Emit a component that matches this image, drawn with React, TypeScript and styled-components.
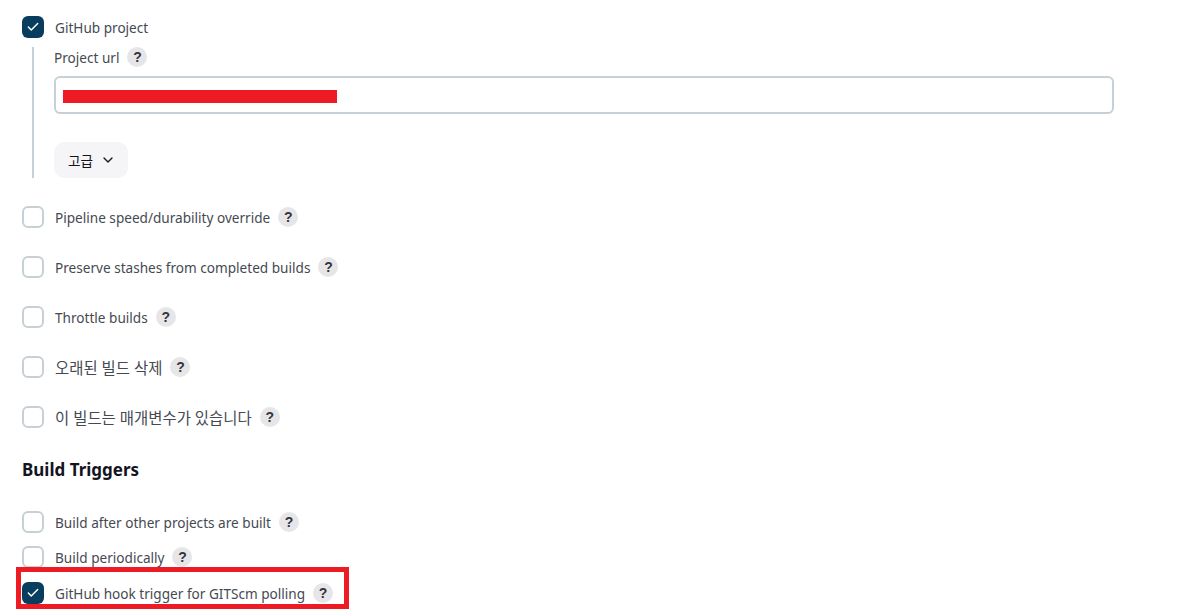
import styled, { createGlobalStyle } from 'styled-components'
import { Check, ChevronDown } from 'lucide-react'

const GlobalStyle = createGlobalStyle`
  html, body {
    margin: 0;
    background: #fff;
    overflow: hidden;
  }
  body {
    font-family: 'Noto Sans', 'Noto Sans CJK KR', sans-serif;
    font-size: 13.6px;
    color: #14141f;
  }
`

const Page = styled.main`
  width: 1203px;
  height: 609px;
  padding: 16px 0 0 22px;
  box-sizing: border-box;
  overflow: hidden;
`

const Row = styled.div<{ $top?: number }>`
  display: flex;
  align-items: center;
  height: 22px;
  margin-top: ${(props) => props.$top ?? 0}px;
`

const Box = styled.span<{ $checked?: boolean }>`
  width: 22px;
  height: 22px;
  box-sizing: border-box;
  flex-shrink: 0;
  display: flex;
  align-items: center;
  justify-content: center;
  border-radius: 6px;
  border: ${(props) => (props.$checked ? 'none' : '2px solid #c6d0d5')};
  background: ${(props) => (props.$checked ? '#083d5e' : '#fff')};
  color: #fff;
`

const RowLabel = styled.span<{ $korean?: boolean }>`
  margin: 2px 0 0 11px;
  line-height: 22px;
  color: #454a52;
  white-space: nowrap;
  font-size: ${(props) => (props.$korean ? '15.45px' : 'inherit')};
`

const Help = styled.span`
  width: 20px;
  height: 20px;
  margin-left: 8px;
  flex-shrink: 0;
  display: flex;
  align-items: center;
  justify-content: center;
  border-radius: 50%;
  background: #e6e6e8;
  color: #33333d;
  font-family: 'Liberation Sans', sans-serif;
  font-size: 14px;
  font-weight: 700;
`

const Nested = styled.div`
  margin: 9px 0 0 10px;
  width: 1082px;
  height: 131px;
  padding-left: 20px;
  border-left: 2px solid #c6d0d5;
  box-sizing: border-box;
`

const FieldLabel = styled.div`
  display: flex;
  align-items: center;
  height: 20px;
  margin-top: 1px;
  color: #454a52;
`

const UrlInput = styled.div`
  position: relative;
  height: 38px;
  margin-top: 9px;
  box-sizing: border-box;
  border: 2px solid #c6d0d5;
  border-radius: 6px;
  background: #fff;
`

const Redaction = styled.span`
  position: absolute;
  left: 7px;
  top: 12px;
  width: 274px;
  height: 13px;
  background: #ed1c24;
`

const AdvancedButton = styled.button`
  display: flex;
  align-items: center;
  gap: 7px;
  height: 36px;
  width: 74px;
  margin-top: 28px;
  padding: 0 0 0 14px;
  border: none;
  border-radius: 10px;
  background: #f5f5f8;
  color: #14141f;
  font: inherit;
`

const SectionTitle = styled.h2`
  margin: 30px 0 0;
  height: 24px;
  line-height: 24px;
  font-size: 17px;
  font-weight: 700;
  color: #14141f;
`

const Highlighted = styled.div`
  position: relative;
`

const HighlightFrame = styled.span`
  position: absolute;
  left: -6px;
  top: -15px;
  width: 333px;
  height: 42px;
  box-sizing: border-box;
  border: 5px solid #ed1c24;
  pointer-events: none;
`

const options = [
  { label: 'Pipeline speed/durability override' },
  { label: 'Preserve stashes from completed builds' },
  { label: 'Throttle builds' },
  { label: '오래된 빌드 삭제', korean: true },
  { label: '이 빌드는 매개변수가 있습니다', korean: true },
]

function Option({
  label,
  top,
  checked,
  korean,
}: {
  label: string
  top?: number
  checked?: boolean
  korean?: boolean
}) {
  return (
    <Row $top={top}>
      <Box $checked={checked}>{checked && <Check size={14} strokeWidth={2.5} />}</Box>
      <RowLabel $korean={korean}>{label}</RowLabel>
      <Help>?</Help>
    </Row>
  )
}

export default function App() {
  return (
    <>
      <GlobalStyle />
      <Page>
        <Row>
          <Box $checked>
            <Check size={14} strokeWidth={2.5} />
          </Box>
          <RowLabel>GitHub project</RowLabel>
        </Row>
        <Nested>
          <FieldLabel>
            Project url
            <Help>?</Help>
          </FieldLabel>
          <UrlInput>
            <Redaction />
          </UrlInput>
          <AdvancedButton>
            고급
            <ChevronDown size={16} />
          </AdvancedButton>
        </Nested>
        {options.map((option) => (
          <Option key={option.label} label={option.label} korean={option.korean} top={28} />
        ))}
        <SectionTitle>Build Triggers</SectionTitle>
        <Option label="Build after other projects are built" top={29} />
        <Option label="Build periodically" top={13} />
        <Highlighted>
          <Option label="GitHub hook trigger for GITScm polling" top={14} checked />
          <HighlightFrame />
        </Highlighted>
      </Page>
    </>
  )
}
